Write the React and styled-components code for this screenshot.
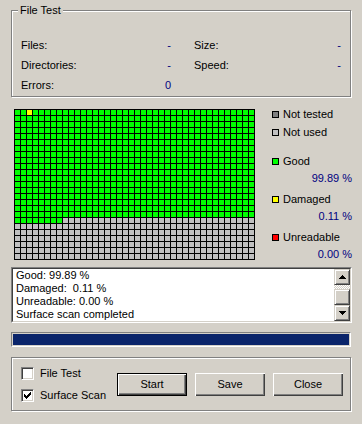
import React from "react";
import styled, { createGlobalStyle } from "styled-components";

const COLS = 40;
const ROWS = 25;

// sector states, row by row: tested area is green, one damaged block, rest not used
const sectors = Array.from({ length: COLS * ROWS }, (_, i) => {
  const row = Math.floor(i / COLS);
  const col = i % COLS;
  if (row === 0 && col === 2) return "#ffff00";
  if (row < 18 || (row === 18 && col < 8)) return "#00ff00";
  return "#c0c0c0";
});

const legend = [
  { label: "Not tested", color: "#808080" },
  { label: "Not used", color: "#c0c0c0", gap: 2 },
  { label: "Good", color: "#00ff00", value: "99.89 %", gap: 13 },
  { label: "Damaged", color: "#ffff00", value: "0.11 %", gap: 5 },
  { label: "Unreadable", color: "#ff0000", value: "0.00 %", gap: 5 },
];

const log = ["Good: 99.89 %", "Damaged:  0.11 %", "Unreadable: 0.00 %", "Surface scan completed"];

function Check() {
  const cols = [2, 3, 4, 3, 2, 1, 0];
  return (
    <svg width="7" height="7" viewBox="0 0 7 7" shapeRendering="crispEdges">
      {cols.map((y, x) => (
        <rect key={x} x={x} y={y} width="1" height="3" fill="#000" />
      ))}
    </svg>
  );
}

function Arrow({ down }) {
  const rows = [0, 1, 2, 3];
  return (
    <svg width="7" height="4" viewBox="0 0 7 4" shapeRendering="crispEdges">
      {rows.map((r) => {
        const y = down ? r : 3 - r;
        return <rect key={r} x={r} y={y} width={7 - r * 2} height="1" fill="#000" />;
      })}
    </svg>
  );
}

export default function App() {
  return (
    <Window>
      <GlobalStyle />
      <StatsBox>
        <Caption>File Test</Caption>
        <StatsGrid>
          <Stat>
            <span>Files:</span>
            <StatValue>-</StatValue>
          </Stat>
          <Stat>
            <span>Size:</span>
            <StatValue>-</StatValue>
          </Stat>
          <Stat>
            <span>Directories:</span>
            <StatValue>-</StatValue>
          </Stat>
          <Stat>
            <span>Speed:</span>
            <StatValue>-</StatValue>
          </Stat>
          <Stat>
            <span>Errors:</span>
            <StatValue>0</StatValue>
          </Stat>
        </StatsGrid>
      </StatsBox>

      <ScanArea>
        <SectorMap>
          {sectors.map((c, i) => (
            <Sector key={i} $color={c} />
          ))}
        </SectorMap>
        <Legend>
          {legend.map((l) => (
            <LegendGroup key={l.label} $gap={l.gap || 0}>
              <LegendItem>
                <Swatch $color={l.color} />
                <span>{l.label}</span>
              </LegendItem>
              {l.value && <Percent>{l.value}</Percent>}
            </LegendGroup>
          ))}
        </Legend>
      </ScanArea>

      <LogBox>
        <LogInner>
          <LogText>
            {log.map((line) => (
              <div key={line}>{line}</div>
            ))}
          </LogText>
          <ScrollBar>
            <ScrollButton>
              <Arrow />
            </ScrollButton>
            <ScrollTrack />
            <ScrollButton />
            <ScrollButton>
              <Arrow down />
            </ScrollButton>
          </ScrollBar>
        </LogInner>
      </LogBox>

      <Progress>
        <ProgressFill $percent={100} />
      </Progress>

      <ActionsBox>
        <CheckColumn>
          <CheckRow>
            <CheckBox />
            <span>File Test</span>
          </CheckRow>
          <CheckRow>
            <CheckBox>
              <Check />
            </CheckBox>
            <span>Surface Scan</span>
          </CheckRow>
        </CheckColumn>
        <ButtonRow>
          <Button $default>Start</Button>
          <Button>Save</Button>
          <Button>Close</Button>
        </ButtonRow>
      </ActionsBox>
    </Window>
  );
}

const GlobalStyle = createGlobalStyle`
  html, body {
    margin: 0;
    padding: 0;
    background: #d4d0c8;
  }
  body {
    font-family: "Liberation Sans", Arial, sans-serif;
    font-size: 11px;
    color: #000;
  }
`;

const Window = styled.div`
  width: 362px;
  height: 424px;
  box-sizing: border-box;
  padding: 10px 0 0 11px;
  display: flex;
  flex-direction: column;
  background: #d4d0c8;
`;

const GroupBox = styled.div`
  position: relative;
  width: 340px;
  box-sizing: border-box;
  border: 1px solid #808080;
  box-shadow: inset 1px 1px 0 #fff, 1px 1px 0 #fff;
`;

const StatsBox = styled(GroupBox)``;

const Caption = styled.div`
  position: absolute;
  top: -7px;
  left: 6px;
  padding: 0 2px;
  line-height: 13px;
  background: #d4d0c8;
`;

const StatsGrid = styled.div`
  display: grid;
  grid-template-columns: 150px 147px;
  column-gap: 23px;
  padding: 24px 0 1px 9px;
`;

const Stat = styled.div`
  display: flex;
  justify-content: space-between;
  line-height: 20px;
`;

const StatValue = styled.span`
  color: #000080;
`;

const ScanArea = styled.div`
  display: flex;
  align-items: flex-start;
  margin-top: 9px;
`;

const SectorMap = styled.div`
  display: grid;
  grid-template-columns: repeat(${COLS}, 5px);
  grid-auto-rows: 5px;
  gap: 1px;
  padding: 1px;
  margin: 3px 0 0 3px;
  background: #000;
`;

const Sector = styled.div`
  background: ${(p) => p.$color};
`;

const Legend = styled.div`
  width: 80px;
  margin-left: 17px;
  display: flex;
  flex-direction: column;
`;

const LegendGroup = styled.div`
  display: flex;
  flex-direction: column;
  margin-top: ${(p) => p.$gap}px;
`;

const LegendItem = styled.div`
  display: flex;
  align-items: center;
  gap: 4px;
  height: 16px;
`;

const Swatch = styled.div`
  width: 7px;
  height: 7px;
  box-sizing: border-box;
  border: 1px solid #000;
  background: ${(p) => p.$color};
`;

const Percent = styled.div`
  margin-top: 1px;
  line-height: 16px;
  text-align: right;
  color: #000080;
`;

const LogBox = styled.div`
  margin-top: 5px;
  width: 341px;
  height: 56px;
  box-sizing: border-box;
  border: 1px solid;
  border-color: #808080 #fff #fff #808080;
  display: flex;
`;

const LogInner = styled.div`
  flex: 1;
  display: flex;
  border: 1px solid;
  border-color: #404040 #d4d0c8 #d4d0c8 #404040;
  background: #fff;
`;

const LogText = styled.div`
  flex: 1;
  padding-left: 3px;
  line-height: 13px;
  white-space: pre;
  overflow: hidden;
`;

const ScrollBar = styled.div`
  width: 16px;
  display: flex;
  flex-direction: column;
`;

const ScrollButton = styled.div`
  width: 16px;
  height: 16px;
  box-sizing: border-box;
  border: 1px solid;
  border-color: #d4d0c8 #404040 #404040 #d4d0c8;
  box-shadow: inset 1px 1px 0 #fff, inset -1px -1px 0 #808080;
  background: #d4d0c8;
  display: flex;
  align-items: center;
  justify-content: center;
`;

const ScrollTrack = styled.div`
  height: 4px;
  background: repeating-conic-gradient(#fff 0 25%, #d4d0c8 0 50%) 0 0 / 2px 2px;
`;

const Progress = styled.div`
  margin-top: 9px;
  width: 340px;
  height: 15px;
  box-sizing: border-box;
  border: 1px solid;
  border-color: #808080 #fff #fff #808080;
  padding: 1px;
`;

const ProgressFill = styled.div`
  height: 100%;
  width: ${(p) => p.$percent}%;
  background: #0a246a;
`;

const ActionsBox = styled(GroupBox)`
  margin-top: 10px;
  height: 54px;
  display: flex;
  align-items: center;
  padding-left: 9px;
`;

const CheckColumn = styled.div`
  width: 96px;
  display: flex;
  flex-direction: column;
`;

const CheckRow = styled.label`
  display: flex;
  align-items: center;
  gap: 6px;
  height: 22px;
`;

const CheckBox = styled.div`
  width: 13px;
  height: 13px;
  box-sizing: border-box;
  border: 1px solid;
  border-color: #808080 #fff #fff #808080;
  box-shadow: inset 1px 1px 0 #404040, inset -1px -1px 0 #d4d0c8;
  background: #fff;
  display: flex;
  align-items: center;
  justify-content: center;
`;

const ButtonRow = styled.div`
  display: flex;
  gap: 8px;
`;

const Button = styled.button`
  width: 70px;
  height: 23px;
  padding: 0;
  box-sizing: border-box;
  font: inherit;
  color: #000;
  background: #d4d0c8;
  border: ${(p) => (p.$default ? "1px solid #000" : "none")};
  box-shadow: inset 1px 1px 0 #fff, inset -1px -1px 0 #404040,
    inset -2px -2px 0 #808080;
`;
